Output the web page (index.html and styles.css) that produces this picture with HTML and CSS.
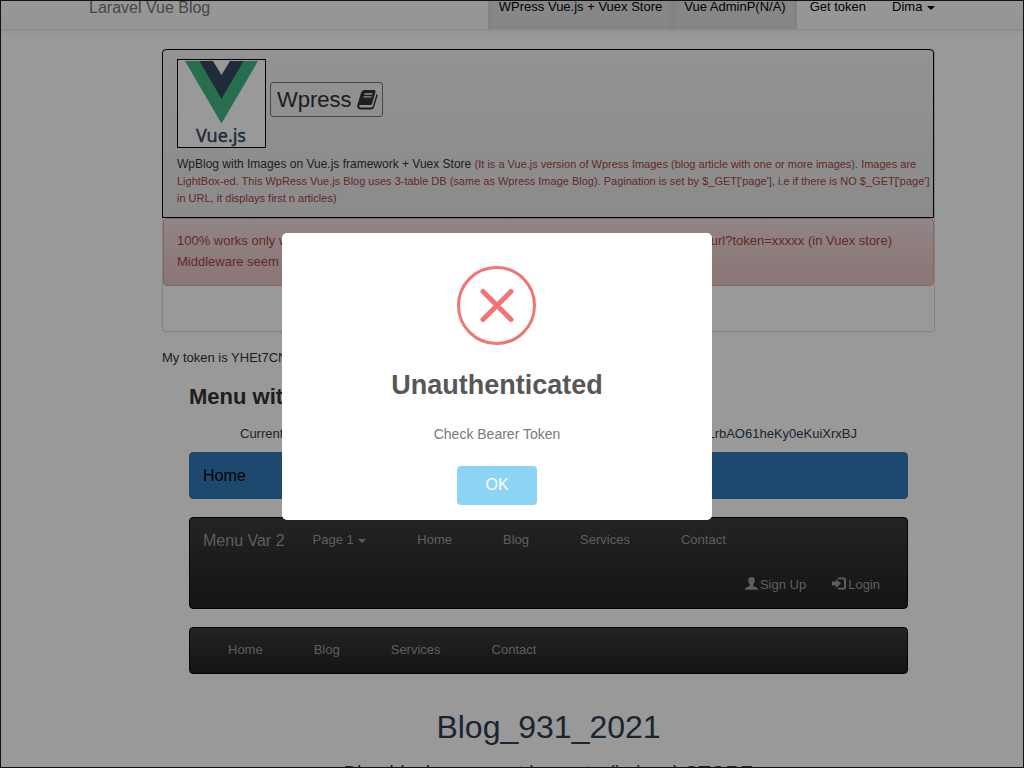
FILE: index.html
```html
<!DOCTYPE html>
<html lang="en">
<head>
<meta charset="utf-8">
<title>Laravel Vue Blog</title>
<link rel="stylesheet" href="styles.css">
</head>
<body>
<div class="screen">
  <header class="topbar">
    <a class="brand" href="#">Laravel Vue Blog</a>
    <nav class="topnav">
      <a class="active" href="#">WPress Vue.js + Vuex Store</a>
      <a class="active" href="#">Vue AdminP(N/A)</a>
      <a href="#">Get token</a>
      <a href="#">Dima <span class="caret"></span></a>
    </nav>
  </header>
  <main class="container">
    <section class="panel">
      <div class="panel-heading">
        <div class="heading-row">
          <svg class="logo" viewBox="0 0 89 89" role="img" aria-label="Vue.js">
            <rect x="0.5" y="0.5" width="88" height="88" fill="#fff" stroke="#000"/>
            <path d="M8 2H81L44.500 64.500Z" fill="#41b883"/>
            <path d="M22.500 2H66.500L44.500 40Z" fill="#34495e"/>
            <path d="M36 2H53L44.500 16Z" fill="#fff"/>
            <text class="logo-text" x="44" y="83" text-anchor="middle">Vue.js</text>
          </svg>
          <button class="wpress" type="button">Wpress
            <svg width="21" height="20" viewBox="0 0 21 20" aria-hidden="true"><path fill="currentColor" fill-rule="evenodd" d="M7 0H17Q19 0 18.500 2L15 14Q14.500 15 13.500 15H3.500Q2 15 2.200 16.500Q2.500 17.500 4 17.500H14Q15.500 17.500 16 16L19.500 4Q21 4.500 20.500 6L17 17.500Q16.300 19.500 14 19.500H4Q1 19.500 0.300 17Q0 16 0.500 14.500L4 3Q5 0 7 0ZM7.500 3.300L7.200 4.700H15.200L15.600 3.300ZM6.700 6.200L6.300 7.600H14.400L14.800 6.200Z"/></svg>
          </button>
        </div>
        <p class="lead">WpBlog with Images on Vue.js framework + Vuex Store <small>(It is a Vue.js version of Wpress Images (blog article with one or more images). Images are<br>LightBox-ed. This WpRess Vue.js Blog uses 3-table DB (same as Wpress Image Blog). Pagination is set by $_GET['page'], i.e if there is NO $_GET['page']<br>in URL, it displays first n articles)</small></p>
      </div>
      <div class="alert">
        <p class="split"><span>100% works only with</span><span class="alert-end">url?token=xxxxx (in Vuex store)</span></p>
        <p>Middleware seem to</p>
      </div>
    </section>
    <p class="token">My token is YHEt7CN</p>
    <div class="inner">
      <h3 class="menu-title">Menu with</h3>
      <p class="split current"><span>Current</span><span>LrbAO61heKy0eKuiXrxBJ</span></p>
      <nav class="bar blue"><a class="bar-brand" href="#">Home</a></nav>
      <nav class="bar dark">
        <div class="bar-row">
          <a class="bar-brand" href="#">Menu Var 2</a>
          <a class="drop" href="#">Page 1 <span class="caret"></span></a>
          <div class="links"><a href="#">Home</a><a href="#">Blog</a><a href="#">Services</a><a href="#">Contact</a></div>
        </div>
        <div class="bar-row account">
          <a href="#"><svg width="13" height="13" viewBox="0 0 13 13" aria-hidden="true"><path fill="currentColor" d="M6.500 0C9 0 10 1.500 9.700 4C9.500 6 8.500 7 8.200 7.500V9C9 10 13 10 13 12.700H0C0 10 4 10 4.800 9V7.500C4.500 7 3.500 6 3.300 4C3 1.500 4 0 6.500 0Z"/></svg>Sign Up</a>
          <a href="#"><svg width="14" height="13" viewBox="0 0 14 13" aria-hidden="true"><path fill="currentColor" d="M0 4.500H4V2L9 6.500L4 11V8.500H0ZM6 0.500H12Q14 0.500 14 2.500V10.500Q14 12.500 12 12.500H6V10.700H11Q12 10.700 12 9.700V3.300Q12 2.300 11 2.300H6Z"/></svg>Login</a>
        </div>
      </nav>
      <nav class="bar dark">
        <div class="bar-row"><div class="links"><a href="#">Home</a><a href="#">Blog</a><a href="#">Services</a><a href="#">Contact</a></div></div>
      </nav>
      <h1 class="title">Blog_931_2021</h1>
      <h2 class="subtitle">Blog blocks, request by router(in json) STORE</h2>
    </div>
  </main>
  <div class="overlay">
    <div class="modal" role="dialog" aria-modal="true" aria-labelledby="modal-title">
      <svg class="error" viewBox="0 0 80 80" aria-hidden="true"><circle cx="39.500" cy="39.500" r="38" fill="none" stroke="#f27474" stroke-width="3"/><path d="M26 25.500L54 53.500M54 25.500L26 53.500" stroke="#f27474" stroke-width="5" stroke-linecap="round"/></svg>
      <h2 class="modal-title" id="modal-title">Unauthenticated</h2>
      <p class="modal-text">Check Bearer Token</p>
      <button class="ok" type="button">OK</button>
    </div>
  </div>
</div>
</body>
</html>
```
FILE: styles.css
```css
* { box-sizing: border-box; }
body { margin: 0; background: #fff; color: #333; font: 13px/21px "Liberation Sans", Arial, sans-serif; }
h1, h2, h3, p { margin: 0; }
a { color: inherit; text-decoration: none; }
.screen { position: relative; height: 100vh; overflow: hidden; border: 1px solid #121212; }
.topbar { display: flex; justify-content: space-between; height: 47px; margin-top: -18px; padding: 0 88px; background: linear-gradient(#fff, #f8f8f8); border-bottom: 1px solid #e7e7e7; box-shadow: 0 1px 4px rgba(0, 0, 0, .1); }
.brand { padding: 14px 0; font-size: 16px; color: #777; }
.topnav { display: flex; margin-right: -13px; }
.topnav a { padding: 13px; color: #000; }
.topnav .active { padding: 13px 11px; background: #e2e2e2; box-shadow: inset 0 3px 9px rgba(0, 0, 0, .08); }
.caret { display: inline-block; margin-left: 1px; vertical-align: middle; border-top: 4px solid; border-left: 4px solid transparent; border-right: 4px solid transparent; }
.container { padding: 19px 88px 0 161px; }
.panel { padding-bottom: 45px; border: 1px solid #ddd; border-top: 0; border-radius: 4px; box-shadow: 0 1px 1px rgba(0, 0, 0, .05); }
.panel-heading { margin: 0 0 0 -1px; padding: 9px 4px 10px 14px; border: 1px solid #000; border-radius: 4px 4px 0 0; background: linear-gradient(#f5f5f5, #e8e8e8); }
.heading-row { display: flex; align-items: center; gap: 4px; margin-bottom: 8px; }
.logo { width: 89px; height: 89px; }
.logo-text { font: 18px "Noto Sans", sans-serif; fill: #34495e; stroke: #34495e; stroke-width: .4; }
.wpress { display: flex; align-items: center; gap: 5px; margin-bottom: 8px; padding: 0 4px 0 6px; height: 35px; border: 1px solid #777; border-radius: 3px; background: transparent; color: #333; font: 22px "Liberation Sans", Arial, sans-serif; }
.lead { font-size: 12px; line-height: 17px; white-space: nowrap; }
.lead small { font-size: 11px; color: #a94442; }
.alert { padding: 11px 13px 13px; border: 1px solid #dca7a7; border-radius: 4px; background: linear-gradient(#f2dede, #e7c3c3); color: #a94442; }
.split { display: flex; justify-content: space-between; }
.alert-end { margin-right: 28px; }
.token { margin-top: 15px; }
.inner { margin: 0 27px; }
.menu-title { margin-top: 16px; font-size: 22px; line-height: 26px; }
.current { margin: 13px 51px 8px; color: #2c3e50; }
.bar { margin-bottom: 18px; border: 1px solid #080808; border-radius: 4px; }
.blue { border-color: #337ab7; background: #337ab7; color: #000; }
.dark { background: linear-gradient(#3c3c3c, #222); color: #9d9d9d; }
.bar-brand { display: inline-block; padding: 12px 13px; font-size: 16px; }
.bar-row { display: flex; height: 45px; }
.drop { padding: 11px 13px 11px 15px; }
.links { display: flex; gap: 51px; padding: 11px 38px; }
.account { justify-content: flex-end; gap: 26px; padding: 11px 27px; }
.account svg { margin-right: 2px; vertical-align: -1px; }
.title { margin-top: 35px; text-align: center; font-size: 32px; line-height: 36px; font-weight: 400; color: #2c3e50; }
.subtitle { margin-top: 16px; text-align: center; font-size: 20px; line-height: 24px; font-weight: 400; color: #2c3e50; white-space: nowrap; }
.overlay { position: absolute; inset: 0; display: flex; align-items: center; justify-content: center; padding: 0 30px 16px 0; background: rgba(0, 0, 0, .4); }
.modal { display: flex; flex-direction: column; align-items: center; width: 430px; padding: 33px 20px 15px; border-radius: 5px; background: #fff; text-align: center; }
.error { width: 80px; height: 80px; }
.modal-title { margin-top: 22px; font-size: 27px; line-height: 34px; color: #575757; }
.modal-text { margin: 21px 0; font-size: 14px; line-height: 22px; color: #797979; }
.ok { width: 80px; height: 39px; border: 0; border-radius: 4px; background: #8cd4f5; color: #fff; font: 16px "Liberation Sans", Arial, sans-serif; }
```
